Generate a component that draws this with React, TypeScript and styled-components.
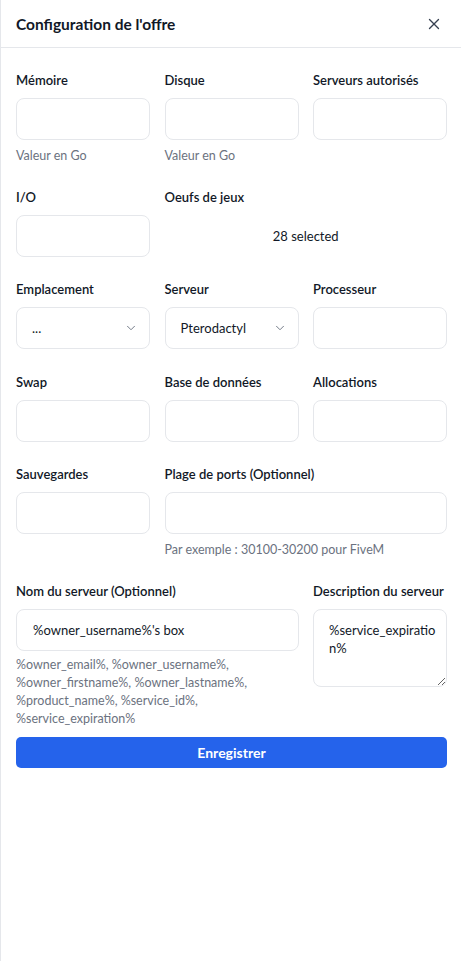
import React from "react";
import styled, { createGlobalStyle } from "styled-components";
import { X, ChevronDown } from "lucide-react";

const Global = createGlobalStyle`
  * { box-sizing: border-box; }
  html, body { margin: 0; padding: 0; background: #ffffff; }
  body { font-family: "Lato", "Noto Sans", Arial, sans-serif; color: #111827; }
`;

const Panel = styled.div`
  width: 461px;
  min-height: 961px;
  background: #fff;
  border-left: 1px solid #e5e7eb;
  display: flex;
  flex-direction: column;
`;

const Header = styled.header`
  height: 48px;
  border-bottom: 1px solid #e5e7eb;
  display: flex;
  align-items: center;
  justify-content: space-between;
  padding: 0 18px 0 15px;
`;

const Title = styled.h2`
  margin: 0;
  font-size: 15.5px;
  font-weight: 700;
  color: #111827;
`;

const CloseButton = styled.button`
  border: 0;
  background: transparent;
  padding: 0;
  display: flex;
  color: #374151;
  cursor: pointer;
`;

const Body = styled.form`
  padding: 22px 14px 16px 15px;
  display: flex;
  flex-direction: column;
  gap: 9px;
`;

const Grid = styled.div`
  display: grid;
  grid-template-columns: repeat(3, 1fr);
  column-gap: 14.5px;
  row-gap: 22.5px;
`;

const Field = styled.div<{ $span?: number }>`
  display: flex;
  flex-direction: column;
  grid-column: span ${(p) => p.$span ?? 1};
  min-width: 0;
`;

const Label = styled.label`
  font-size: 13px;
  font-weight: 600;
  line-height: 20px;
  color: #111827;
  margin-bottom: 8px;
  white-space: nowrap;
`;

const Input = styled.input`
  height: 42px;
  width: 100%;
  border: 1px solid #e5e7eb;
  border-radius: 8px;
  padding: 0 16px;
  font-family: inherit;
  font-size: 13px;
  color: #111827;
  background: #fff;
  outline: none;
`;

const TextArea = styled.textarea`
  height: 78px;
  width: 100%;
  border: 1px solid #e5e7eb;
  border-radius: 8px;
  padding: 11px 6px 11px 15px;
  font-family: inherit;
  font-size: 13px;
  line-height: 18px;
  color: #111827;
  background: #fff;
  outline: none;
  resize: both;
`;

const SelectBox = styled.div`
  height: 42px;
  border: 1px solid #e5e7eb;
  border-radius: 8px;
  padding: 0 11px 0 15px;
  display: flex;
  align-items: center;
  justify-content: space-between;
  font-size: 13px;
  color: #111827;
  background: #fff;
`;

const Chevron = styled(ChevronDown)`
  color: #6b7280;
`;

const MultiSummary = styled.div`
  height: 42px;
  display: flex;
  align-items: center;
  justify-content: center;
  font-size: 13px;
  color: #111827;
`;

const Help = styled.p<{ $multi?: boolean }>`
  margin: ${(p) => (p.$multi ? "5px" : "8px")} 0 0;
  font-size: 12.5px;
  line-height: ${(p) => (p.$multi ? "18px" : "16px")};
  color: #6b7280;
`;

const SubmitButton = styled.button`
  height: 31px;
  width: 100%;
  border: 0;
  border-radius: 5px;
  background: #2563eb;
  color: #fff;
  font-family: inherit;
  font-size: 14px;
  font-weight: 700;
  cursor: pointer;
`;

export default function App() {
  return (
    <>
      <Global />
      <Panel>
        <Header>
          <Title>Configuration de l'offre</Title>
          <CloseButton type="button" aria-label="Fermer">
            <X size={18} strokeWidth={1.8} />
          </CloseButton>
        </Header>
        <Body onSubmit={(e) => e.preventDefault()}>
          <Grid>
            <Field>
              <Label>Mémoire</Label>
              <Input />
              <Help>Valeur en Go</Help>
            </Field>
            <Field>
              <Label>Disque</Label>
              <Input />
              <Help>Valeur en Go</Help>
            </Field>
            <Field>
              <Label>Serveurs autorisés</Label>
              <Input />
            </Field>

            <Field>
              <Label>I/O</Label>
              <Input />
            </Field>
            <Field $span={2}>
              <Label>Oeufs de jeux</Label>
              <MultiSummary>28 selected</MultiSummary>
            </Field>

            <Field>
              <Label>Emplacement</Label>
              <SelectBox>
                <span>...</span>
                <Chevron size={14} strokeWidth={1.6} />
              </SelectBox>
            </Field>
            <Field>
              <Label>Serveur</Label>
              <SelectBox>
                <span>Pterodactyl</span>
                <Chevron size={14} strokeWidth={1.6} />
              </SelectBox>
            </Field>
            <Field>
              <Label>Processeur</Label>
              <Input />
            </Field>

            <Field>
              <Label>Swap</Label>
              <Input />
            </Field>
            <Field>
              <Label>Base de données</Label>
              <Input />
            </Field>
            <Field>
              <Label>Allocations</Label>
              <Input />
            </Field>

            <Field>
              <Label>Sauvegardes</Label>
              <Input />
            </Field>
            <Field $span={2}>
              <Label>Plage de ports (Optionnel)</Label>
              <Input />
              <Help>Par exemple : 30100-30200 pour FiveM</Help>
            </Field>

            <Field $span={2}>
              <Label>Nom du serveur (Optionnel)</Label>
              <Input defaultValue="%owner_username%'s box" />
              <Help $multi>
                %owner_email%, %owner_username%,
                <br />
                %owner_firstname%, %owner_lastname%,
                <br />
                %product_name%, %service_id%,
                <br />
                %service_expiration%
              </Help>
            </Field>
            <Field>
              <Label>Description du serveur</Label>
              <TextArea defaultValue="%service_expiration%" />
            </Field>
          </Grid>
          <SubmitButton type="submit">Enregistrer</SubmitButton>
        </Body>
      </Panel>
    </>
  );
}
